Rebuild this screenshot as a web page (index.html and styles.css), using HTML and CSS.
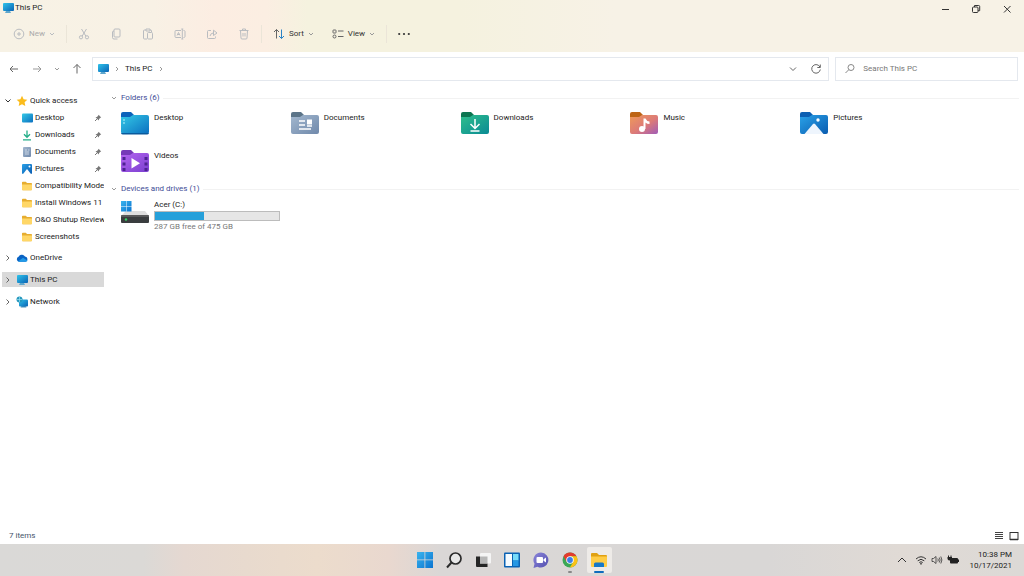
FILE: index.html
```html
<!DOCTYPE html>
<html lang="en">
<head>
<meta charset="utf-8">
<meta name="viewport" content="width=device-width, initial-scale=1">
<title>This PC</title>
<link rel="stylesheet" href="styles.css">
</head>
<body>
<svg class="sprite" aria-hidden="true">
  <defs>
    <linearGradient id="g-screen" x1="0" y1="0" x2="1" y2="1"><stop offset="0" stop-color="#2fc3ea"/><stop offset="1" stop-color="#0a63b5"/></linearGradient>
    <linearGradient id="g-desktop" x1="0" y1="0" x2="1" y2="1"><stop offset="0" stop-color="#34c9e6"/><stop offset="1" stop-color="#0b6fc0"/></linearGradient>
    <linearGradient id="g-doc" x1="0" y1="0" x2="1" y2="1"><stop offset="0" stop-color="#a3b8cf"/><stop offset="1" stop-color="#7089ab"/></linearGradient>
    <linearGradient id="g-down" x1="0" y1="0" x2="1" y2="1"><stop offset="0" stop-color="#2fbf8c"/><stop offset="1" stop-color="#0a8a94"/></linearGradient>
    <linearGradient id="g-music" x1="0" y1="0" x2="1" y2="1"><stop offset="0" stop-color="#ef9a58"/><stop offset=".55" stop-color="#dc7a78"/><stop offset="1" stop-color="#a05cb8"/></linearGradient>
    <linearGradient id="g-pic" x1="0" y1="0" x2="1" y2="1"><stop offset="0" stop-color="#2aa2e8"/><stop offset="1" stop-color="#0a5cb0"/></linearGradient>
    <linearGradient id="g-vid" x1="0" y1="0" x2="1" y2="1"><stop offset="0" stop-color="#b565f0"/><stop offset="1" stop-color="#7a3fd0"/></linearGradient>
    <linearGradient id="g-win" x1="0" y1="0" x2="1" y2="1"><stop offset="0" stop-color="#3ab4ee"/><stop offset="1" stop-color="#0a74d0"/></linearGradient>
    <linearGradient id="g-chat" x1="0" y1="0" x2="1" y2="1"><stop offset="0" stop-color="#8a84d8"/><stop offset="1" stop-color="#5450b0"/></linearGradient>
  </defs>
  <symbol id="pc" viewBox="0 0 12 12"><path d="M4 9h4l1 2H3z" fill="#5fa6cc"/><rect x="1" y="1" width="11" height="8" rx="1" fill="url(#g-screen)"/></symbol>
  <symbol id="chev-r" viewBox="0 0 6 6"><path d="M2 1l2 2-2 2"/></symbol>
  <symbol id="chev-d" viewBox="0 0 6 6"><path d="M1 2l2 2 2-2"/></symbol>
  <symbol id="folder" viewBox="0 0 12 12"><path d="M1 2.500q0-.8.8-.8h3L6 3h4.200q.8 0 .8.800V9.500q0 .8-.8.8H1.800q-.8 0-.8-.8z" fill="#e6ad30"/><path d="M1 4.500h10v5q0 .8-.8.8H1.800q-.8 0-.8-.8z" fill="#ffd767"/></symbol>
  <symbol id="pin" viewBox="0 0 8 8"><path d="M4.600.8l2.600 2.600-.8.3-1.300 1.300-.3 1.500L1.500 3.200 3 2.900l1.300-1.300z" fill="#777"/><path d="M3 5L1 7" stroke="#777"/></symbol>
</svg>

<div class="window">
  <header class="chrome">
    <div class="titlebar">
      <h1 class="title"><svg class="i12"><use href="#pc"/></svg>This PC</h1>
      <div class="controls">
        <button aria-label="Minimize"><svg class="i12 line" viewBox="0 0 12 12"><path d="M3 6.500h7"/></svg></button>
        <button aria-label="Restore"><svg class="i12 line" viewBox="0 0 12 12"><rect x="2.500" y="4" width="5.500" height="5.500" rx="1"/><path d="M4.500 4V2.500h4.200q1 0 1 1v4.200H8"/></svg></button>
        <button aria-label="Close"><svg class="i12 line" viewBox="0 0 12 12"><path d="M3 3l6.500 6.500M9.500 3L3 9.500"/></svg></button>
      </div>
    </div>
    <div class="toolbar">
      <button class="tool new" disabled><svg class="i12 line" viewBox="0 0 12 12"><circle cx="6" cy="6" r="4.800"/><path d="M6 4v4M4 6h4"/></svg>New<svg class="i6 line"><use href="#chev-d"/></svg></button>
      <span class="sep"></span>
      <div class="edit">
        <button class="tool" disabled aria-label="Cut"><svg class="i12 line" viewBox="0 0 12 12"><path d="M3.500 1l4.300 7M8.500 1L4.200 8"/><circle cx="3" cy="9.300" r="1.600"/><circle cx="9" cy="9.300" r="1.600"/></svg></button>
        <button class="tool" disabled aria-label="Copy"><svg class="i12 line" viewBox="0 0 12 12"><rect x="4" y="1" width="6" height="8" rx="1"/><path d="M4 3q-1.500 0-1.500 1v5.500q0 1.500 1.500 1.500h3.500"/></svg></button>
        <button class="tool" disabled aria-label="Paste"><svg class="i12 line" viewBox="0 0 12 12"><path d="M4 2H2.500q-1 0-1 1v7q0 1 1 1H5M8 2h.5q1 0 1 1v1M4 1h4v2H4z"/><rect x="5.500" y="4.500" width="5" height="6.500" rx="1"/></svg></button>
        <button class="tool" disabled aria-label="Rename"><svg class="i12 line" viewBox="0 0 12 12"><path d="M7 2.500H2q-1 0-1 1v5q0 1 1 1h5M9.500 2.500q1.500 0 1.500 1v5q0 1-1.500 1M8.300 1v10M7.300 1h2M7.300 11h2M3 7.500l1.500-3 1.500 3M3.500 6.500h2"/></svg></button>
        <button class="tool" disabled aria-label="Share"><svg class="i12 line" viewBox="0 0 12 12"><path d="M5 2.500H2.500q-1 0-1 1V9.500q0 1 1 1h6q1 0 1-1V8.500M4 8q.5-3 4-3.200M7.500 2.200L11 5 7.500 7.500z"/></svg></button>
        <button class="tool" disabled aria-label="Delete"><svg class="i12 line" viewBox="0 0 12 12"><path d="M1.500 2.500h9M4.500 2.500V1h3v1.500M2.500 2.500l.5 7.500q0 1 1 1h4q1 0 1-1l.5-7.500M5 5v3.500M7 5v3.500"/></svg></button>
      </div>
      <span class="sep"></span>
      <button class="tool"><svg class="i12 line" viewBox="0 0 12 12"><path d="M3.500 10.500v-9M1 4l2.500-2.500L6 4"/><path class="blue" d="M8.500 1.500v9M6 8l2.500 2.500L11 8"/></svg>Sort<svg class="i6 line"><use href="#chev-d"/></svg></button>
      <button class="tool view"><svg class="i12 line" viewBox="0 0 12 12"><rect x="1" y="2" width="3" height="3" rx=".5"/><rect x="1" y="7" width="3" height="3" rx="1.500"/><path d="M6 3h5.500M6 8.500h5.500"/></svg>View<svg class="i6 line"><use href="#chev-d"/></svg></button>
      <span class="sep"></span>
      <button class="tool" aria-label="See more"><svg class="i12" viewBox="0 0 12 12" fill="#333"><circle cx="1.200" cy="6" r="1.100"/><circle cx="6" cy="6" r="1.100"/><circle cx="10.800" cy="6" r="1.100"/></svg></button>
    </div>
  </header>

  <nav class="navbar" aria-label="Location">
    <div class="moves">
      <button aria-label="Back"><svg class="i12 line" viewBox="0 0 12 12"><path d="M10 6H2M5 3L2 6l3 3"/></svg></button>
      <button class="dim" aria-label="Forward"><svg class="i12 line" viewBox="0 0 12 12"><path d="M2 6h8M7 3l3 3-3 3"/></svg></button>
      <button aria-label="Recent locations"><svg class="i6 line"><use href="#chev-d"/></svg></button>
      <button aria-label="Up"><svg class="i12 line" viewBox="0 0 12 12"><path d="M6 10.500v-9M2.500 5L6 1.500 9.500 5"/></svg></button>
    </div>
    <div class="address">
      <svg class="i12"><use href="#pc"/></svg>
      <svg class="i6 line"><use href="#chev-r"/></svg>
      <a href="#this-pc">This PC</a>
      <svg class="i6 line"><use href="#chev-r"/></svg>
      <span class="grow"></span>
      <button aria-label="Previous locations"><svg class="i12 line" viewBox="0 0 12 12"><path d="M3 4.500l3 3 3-3"/></svg></button>
      <button aria-label="Refresh"><svg class="i12 line" viewBox="0 0 12 12"><path d="M10 4.200A4.300 4.300 0 1 0 10.300 6.500M10.300 1.500v3h-3"/></svg></button>
    </div>
    <label class="search">
      <svg class="i12 line" viewBox="0 0 12 12"><circle cx="7" cy="4.500" r="3"/><path d="M4.800 6.700L1.500 10"/></svg>
      <input type="search" placeholder="Search This PC" aria-label="Search This PC">
    </label>
  </nav>

  <div class="body">
    <aside class="tree">
      <a class="row" href="#quick"><svg class="i8 line dark" viewBox="0 0 8 8"><path d="M1.500 2.500L4 5l2.500-2.500"/></svg><svg class="i12" viewBox="0 0 12 12"><path d="M6 .8l1.600 3.400 3.700.5-2.700 2.600.7 3.700L6 9.200 2.700 11l.7-3.700L.7 4.700l3.700-.5z" fill="#fbbc1c"/></svg><span>Quick access</span></a>
      <a class="row sub" href="#desktop"><svg class="i12" viewBox="0 0 12 12"><rect x="1" y="1.500" width="11" height="9" rx="1" fill="url(#g-desktop)"/></svg><span>Desktop</span><svg class="i8"><use href="#pin"/></svg></a>
      <a class="row sub" href="#downloads"><svg class="i12" viewBox="0 0 12 12" fill="none" stroke="#22ad87" stroke-width="1.300"><path d="M6 1.500v6.500M3 5.300l3 3 3-3M2 10.800h8"/></svg><span>Downloads</span><svg class="i8"><use href="#pin"/></svg></a>
      <a class="row sub" href="#documents"><svg class="i12" viewBox="0 0 12 12"><rect x="2" y="1" width="8" height="10" rx="1" fill="url(#g-doc)"/><path d="M4 4h2M4 6h4M4 8h4M7 4h1.500" stroke="#e6eef6" stroke-width=".7"/></svg><span>Documents</span><svg class="i8"><use href="#pin"/></svg></a>
      <a class="row sub" href="#pictures"><svg class="i12" viewBox="0 0 12 12"><rect x="1" y="1" width="10" height="10" rx="1" fill="url(#g-pic)"/><path d="M2 11l4-5 4 5z" fill="#fff"/><circle cx="8.500" cy="3.500" r="1" fill="#fff"/></svg><span>Pictures</span><svg class="i8"><use href="#pin"/></svg></a>
      <a class="row sub" href="#compat"><svg class="i12"><use href="#folder"/></svg><span>Compatibility Mode</span></a>
      <a class="row sub" href="#install"><svg class="i12"><use href="#folder"/></svg><span>Install Windows 11</span></a>
      <a class="row sub" href="#shutup"><svg class="i12"><use href="#folder"/></svg><span>O&amp;O Shutup Review</span></a>
      <a class="row sub" href="#screens"><svg class="i12"><use href="#folder"/></svg><span>Screenshots</span></a>
      <a class="row root" href="#onedrive"><svg class="i8 line" viewBox="0 0 8 8"><path d="M2.500 1.500L5 4 2.500 6.500"/></svg><svg class="i12" viewBox="0 0 12 12"><path d="M3 9.800a2.600 2.600 0 0 1-.5-5A3.700 3.700 0 0 1 9 4.500a2.700 2.700 0 0 1 .5 5.300z" fill="#0a63c4"/><path d="M2 9.500l5-3.800 4.600 3Q11 9.800 9.500 9.800H3z" fill="#229be8"/></svg><span>OneDrive</span></a>
      <a class="row root selected" href="#this-pc" aria-current="page"><svg class="i8 line" viewBox="0 0 8 8"><path d="M2.500 1.500L5 4 2.500 6.500"/></svg><svg class="i12"><use href="#pc"/></svg><span>This PC</span></a>
      <a class="row root" href="#network"><svg class="i8 line" viewBox="0 0 8 8"><path d="M2.500 1.500L5 4 2.500 6.500"/></svg><svg class="i12" viewBox="0 0 12 12"><path d="M5.500 10h4l1 1.500h-6z" fill="#4a90b8"/><rect x="3" y="3.500" width="9" height="7" rx="1" fill="url(#g-screen)"/><circle cx="3.500" cy="3.500" r="3" fill="#2597bd"/><path d="M1 3.500h5M3.500.8v5.400" stroke="#9be0f0" stroke-width=".7"/></svg><span>Network</span></a>
    </aside>

    <main class="content" id="this-pc">
      <section>
        <h2 class="group"><svg class="i6 line"><use href="#chev-d"/></svg>Folders (6)</h2>
        <div class="grid">
          <a class="tile" href="#desktop"><svg class="big" viewBox="0 0 28 26"><path d="M0 4q0-2 2-2h8l3 3v5H0z" fill="#0c62ba"/><path d="M0 7h9l3-2h14q2 0 2 2v15q0 2-2 2H2q-2 0-2-2z" fill="url(#g-desktop)"/><path d="M2 10h2M2 13h2" stroke="#b8f2fa"/><path d="M0 23h28q-.5 1.500-2 1.500H2q-1.500 0-2-1.500z" fill="#0a5a9c"/></svg><span>Desktop</span></a>
          <a class="tile" href="#documents"><svg class="big" viewBox="0 0 28 26"><g transform="translate(0 1)"><path d="M0 3q0-2 2-2h8l3 3v5H0z" fill="#5b7488"/><path d="M0 6h9l3-2h14q2 0 2 2v15q0 2-2 2H2q-2 0-2-2z" fill="url(#g-doc)"/><path d="M8 10h6M8 14h6M8 18h12M16 15h5" stroke="#fff" stroke-width="1.600"/><rect x="16" y="8.500" width="5" height="5" fill="#fff"/></g></svg><span>Documents</span></a>
          <a class="tile" href="#downloads"><svg class="big" viewBox="0 0 28 26"><g transform="translate(0 1)"><path d="M0 3q0-2 2-2h8l3 3v5H0z" fill="#0b7550"/><path d="M0 6h9l3-2h14q2 0 2 2v15q0 2-2 2H2q-2 0-2-2z" fill="url(#g-down)"/><path d="M14 8v9M9.500 13l4.500 4.500L18.500 13M9.500 20h9" fill="none" stroke="#fff" stroke-width="1.500"/></g></svg><span>Downloads</span></a>
          <a class="tile" href="#music"><svg class="big" viewBox="0 0 28 26"><g transform="translate(0 1)"><path d="M0 3q0-2 2-2h8l3 3v5H0z" fill="#bd6415"/><path d="M0 6h9l3-2h14q2 0 2 2v15q0 2-2 2H2q-2 0-2-2z" fill="url(#g-music)"/><circle cx="12" cy="18" r="3" fill="#fff"/><path d="M13.500 18V7.500h2q.8 2.500 4 3v2.500q-2.500 0-4-1.500v6.500z" fill="#fff"/></g></svg><span>Music</span></a>
          <a class="tile" href="#pictures"><svg class="big" viewBox="0 0 28 26"><g transform="translate(0 1)"><path d="M0 3q0-2 2-2h8l3 3v5H0z" fill="#0c5fb2"/><path d="M0 6h9l3-2h14q2 0 2 2v15q0 2-2 2H2q-2 0-2-2z" fill="url(#g-pic)"/><path d="M4.500 23l8.500-10q1-1 2 0l8.500 10z" fill="#eef5fd"/><circle cx="18" cy="9" r="1.700" fill="#fff"/></g></svg><span>Pictures</span></a>
          <a class="tile" href="#videos"><svg class="big" viewBox="0 0 28 26"><g transform="translate(0 1)"><path d="M0 3q0-2 2-2h8l3 3v5H0z" fill="#7639b8"/><path d="M0 6h9l3-2h14q2 0 2 2v15q0 2-2 2H2q-2 0-2-2z" fill="url(#g-vid)"/><path d="M3 8v15M25 8v15" stroke="#4d2292" stroke-width="3" stroke-dasharray="3 2.500"/><path d="M10.500 9v10.500l8.500-5.200z" fill="#fff"/></g></svg><span>Videos</span></a>
        </div>
      </section>
      <section>
        <h2 class="group"><svg class="i6 line"><use href="#chev-d"/></svg>Devices and drives (1)</h2>
        <div class="grid drives">
          <a class="tile" href="#c">
            <svg class="big" viewBox="0 0 28 26"><path d="M5 12h19l4 5H0z" fill="#dedede"/><rect y="16" width="28" height="8" rx="1" fill="#3a3d3f"/><path d="M0 17h28" stroke="#777"/><circle cx="5" cy="20.500" r="1.200" fill="#35d463"/><path d="M0 2h5v5H0zM5.500 2h5v5h-5zM0 7.500h5v5H0zM5.500 7.500h5v5h-5z" fill="url(#g-win)"/></svg>
            <span class="drive"><span>Acer (C:)</span><span class="bar" role="meter" aria-label="Used space" aria-valuemin="0" aria-valuemax="475" aria-valuenow="188"><span class="used" style="width:39.600%"></span></span><span class="free">287 GB free of 475 GB</span></span>
          </a>
        </div>
      </section>
    </main>
  </div>

  <footer class="status">
    <span>7 items</span>
    <div class="modes">
      <button aria-label="Details view"><svg class="i10" viewBox="0 0 10 10" stroke="#444"><path d="M1 1.500h8M1 3.500h8M1 5.500h8M1 7.500h8"/></svg></button>
      <button aria-label="Large icons view"><svg class="i10" viewBox="0 0 10 10" stroke="#333" fill="none"><rect x="1" y="1.500" width="8" height="7"/><path d="M1 8.500h8" stroke-width="1.500"/></svg></button>
    </div>
  </footer>
</div>

<div class="taskbar">
  <div class="apps">
    <button aria-label="Start"><svg class="i18" viewBox="0 0 18 18"><path d="M1 1h7.500v7.500H1zM9.300 1H17v7.500H9.300zM1 9.300h7.500V17H1zM9.300 9.300H17V17H9.300z" fill="url(#g-win)"/></svg></button>
    <button aria-label="Search"><svg class="i18" viewBox="0 0 18 18" fill="none" stroke="#2b2b2b" stroke-width="1.700"><circle cx="10.500" cy="7.500" r="5.500" fill="#e8e8e8"/><path d="M6.500 11.500L2 16.500" stroke-width="2"/></svg></button>
    <button aria-label="Task view"><svg class="i18" viewBox="0 0 18 18"><rect x="6" y="2" width="11" height="10.500" rx="1" fill="#f5f5f5"/><path d="M2 5.500h4v7h7.500v3.500H3q-1 0-1-1z" fill="#252525"/><rect x="6" y="5.500" width="7.500" height="7" fill="#b7b7b7"/></svg></button>
    <button aria-label="Widgets"><svg class="i18" viewBox="0 0 18 18"><rect x="1" y="1.500" width="16" height="15" rx="1" fill="#0a62b4"/><rect x="2.500" y="3" width="6.500" height="12" fill="#f5fbff"/><rect x="10" y="3" width="5.500" height="6.500" fill="#76dcfa"/><rect x="10" y="9.500" width="5.500" height="5.500" fill="#2597e4"/></svg></button>
    <button aria-label="Chat"><svg class="i18" viewBox="0 0 18 18"><path d="M9 1.500a7.500 7.500 0 1 1-3.500 14.200L1.500 17l1-4.200A7.500 7.500 0 0 1 9 1.500z" fill="url(#g-chat)"/><rect x="4.500" y="6" width="6.500" height="6" rx="1" fill="#fff"/><path d="M11.500 8.300l2.500-1.800v5l-2.500-1.800z" fill="#fff"/></svg></button>
    <button class="running" aria-label="Chrome"><svg class="i18" viewBox="0 0 18 18"><circle cx="9" cy="9" r="7.500" fill="#3aa756"/><path d="M2.500 5.250A7.500 7.500 0 0 1 15.500 5.250H9L5.750 10.900z" fill="#e33b2e"/><path d="M15.500 5.250A7.500 7.500 0 0 1 8.800 16.500l3.450-5.600L9 5.250z" fill="#fbc116"/><circle cx="9" cy="9" r="3.750" fill="#fff"/><circle cx="9" cy="9" r="2.900" fill="#3c7de8"/></svg></button>
    <button class="active" aria-label="File Explorer"><svg class="i18" viewBox="0 0 18 18"><path d="M1 3q0-1 1-1h5l2 2h7q1 0 1 1v4H1z" fill="#e0a112"/><path d="M1 5.500h16V15q0 1-1 1H2q-1 0-1-1z" fill="#ffcc45"/><path d="M4 16v-3q0-1.500 1.500-1.500h7q1.500 0 1.500 1.500v3z" fill="#1778c8"/></svg></button>
  </div>
  <div class="tray">
    <button aria-label="Show hidden icons"><svg class="i12 line dark" viewBox="0 0 12 12"><path d="M2 8l4-4 4 4"/></svg></button>
    <button class="quick" aria-label="Network, volume and battery">
      <svg class="i12 line dark" viewBox="0 0 12 12"><path d="M1 5q5-4.500 10 0M2.700 6.800q3.300-3 6.600 0M4.300 8.500q1.700-1.500 3.400 0"/><circle cx="6" cy="9.800" r=".5"/></svg>
      <svg class="i12 line dark" viewBox="0 0 12 12"><path d="M1 4.500h1.500L5 2.500v7L2.500 7.500H1zM6.800 4.500q1 1.500 0 3M8.300 3.500q1.600 2.500 0 5M9.800 2.500q2.200 3.500 0 7" stroke-width=".8"/></svg>
      <svg class="i12" viewBox="0 0 12 12"><rect x="3" y="4" width="8" height="5.500" rx="1" fill="#222"/><path d="M11.500 5.500v2.500M1.500 1.500v2M4 1.500v2" stroke="#222"/><path d="M.5 3h4.500v2q-.5 1.500-2.200 1.500T.5 5z" fill="#222"/></svg>
    </button>
    <button class="clock"><span>10:38 PM</span><span>10/17/2021</span></button>
  </div>
</div>
</body>
</html>
```
FILE: styles.css
```css
* { box-sizing: border-box; }
body {
  margin: 0;
  min-height: 100vh;
  display: flex;
  flex-direction: column;
  background: #fff;
  color: #222;
  font: 8px/12px Roboto, "Noto Sans", sans-serif;
}
.sprite { position: absolute; width: 0; height: 0; }
svg { display: block; flex: none; }
a { color: inherit; text-decoration: none; }
button {
  display: flex;
  align-items: center;
  justify-content: center;
  padding: 0;
  border: 0;
  background: none;
  color: inherit;
  font: inherit;
}
h1, h2 { margin: 0; font: inherit; }

.i6 { width: 6px; height: 6px; }
.i8 { width: 8px; height: 8px; }
.i10 { width: 10px; height: 10px; }
.i12 { width: 12px; height: 12px; }
.i18 { width: 18px; height: 18px; }
.line { fill: none; stroke: #666; stroke-width: 1; }
.i6.line { stroke: #999; }
.line.dark { stroke: #333; }
.blue { stroke: #2b83c6; }
.grow { flex: 1; }

.window { flex: 1; display: flex; flex-direction: column; }
.chrome {
  background: linear-gradient(90deg, #f7f2e5 0%, #f8f1e5 15%, #fcede2 21%, #fbeee2 26%, #f5f2df 30%, #f5f2df 45%, #f7f2e6 60%, #f7f2e6 100%);
}
.titlebar { display: flex; justify-content: space-between; height: 18px; }
.title { display: flex; gap: 1px; height: 16px; align-items: center; padding-left: 2px; }
.controls { display: flex; padding-right: 2px; }
.controls button { width: 31px; }
.controls .line { stroke: #333; }
.toolbar { display: flex; align-items: center; height: 32px; margin-bottom: 2px; padding: 0 13px; }
.tool { gap: 4px; color: #333; }
.tool.view { margin-left: 18px; }
.tool:disabled { color: #aaa; }
.tool:disabled .line { stroke: #b9bcc0; }
.edit { display: flex; gap: 20px; }
.sep { width: 1px; height: 18px; margin: 0 11px; background: #ebe5d8; }

.navbar { display: flex; align-items: center; height: 34px; padding: 0 6px 0 8px; }
.moves { display: flex; gap: 11px; padding-right: 9px; }
.dim .line { stroke: #999; }
.address, .search {
  display: flex;
  align-items: center;
  height: 24px;
  border: 1px solid #e4e8ee;
}
.address { flex: 21; gap: 5px; padding: 0 6px 0 4px; }
.address button { margin-left: 6px; }
.search { flex: 5; margin-left: 6px; padding-left: 8px; gap: 7px; }
.search .line { stroke: #888; }
.search input {
  flex: 1;
  min-width: 0;
  padding: 0;
  border: 0;
  outline: 0;
  background: none;
  font: inherit;
}
.search input::placeholder { color: #777; }

.body { flex: 1; display: flex; gap: 6px; }
.tree { width: 104px; padding-top: 6px; }
.row { display: flex; align-items: center; gap: 2px; height: 17px; padding-left: 4px; white-space: nowrap; }
.row .i8:first-child { margin-right: 2px; }
.row span { flex: 1; overflow: hidden; }
.row.sub { padding-left: 21px; }
.row .i8:last-child { margin-right: 2px; }
.row.root { height: 15px; margin: 7px 0 0 2px; padding-left: 2px; }
.selected { background: #d9d9d9; }
.row.sub + .root { margin-top: 5px; }

.content { flex: 1; padding-top: 6px; }
.group { display: flex; align-items: center; gap: 4px; padding: 0 5px 0 1px; color: #404c96; }
.group::after { content: ""; flex: 1; height: 1px; background: #f2f2f2; }
.grid {
  display: grid;
  grid-template-columns: repeat(auto-fill, minmax(160px, 1fr));
  row-gap: 12px;
  padding: 6px 54px 9px 11px;
}
.tile { display: flex; gap: 5px; }
.tile > span { padding-top: 2px; }
.big { width: 28px; height: 26px; }
.drives { padding-top: 4px; }
.tile > .drive { display: flex; flex-direction: column; width: 126px; padding: 0; }
.bar { height: 10px; border: 1px solid #bcbcbc; background: #e6e6e6; }
.used { display: block; height: 100%; background: #26a0da; }
.free { color: #777; }

.status { display: flex; align-items: center; justify-content: space-between; height: 17px; padding: 0 5px 0 9px; color: #44546a; }
.modes { display: flex; gap: 5px; }

.taskbar {
  display: grid;
  grid-template-columns: 1fr auto 1fr;
  align-items: center;
  height: 32px;
  background: linear-gradient(90deg, #dad9d7 0%, #dbd9d6 14%, #e5d8d1 18%, #e8dace 24%, #ecdccc 31%, #e9d8cf 38%, #dad7d6 43%, #d9d7d6 75%, #e0dad5 88%, #dcd9d6 100%);
}
.apps { grid-column: 2; display: flex; gap: 4px; }
.apps button { position: relative; width: 25px; height: 26px; }
.running::after, .active::after {
  content: "";
  position: absolute;
  bottom: 0;
  left: 50%;
  width: 4px;
  height: 2px;
  margin-left: -2px;
  border-radius: 1px;
  background: #888;
}
.active { border-radius: 2px; background: #eeebe8; }
.active::after { width: 10px; margin-left: -5px; background: #0f6cbd; }
.tray { display: flex; justify-content: flex-end; align-items: center; gap: 7px; padding-right: 12px; }
.quick { gap: 4px; }
.clock { flex-direction: column; align-items: flex-end; line-height: 11px; margin-left: 3px; }
```
